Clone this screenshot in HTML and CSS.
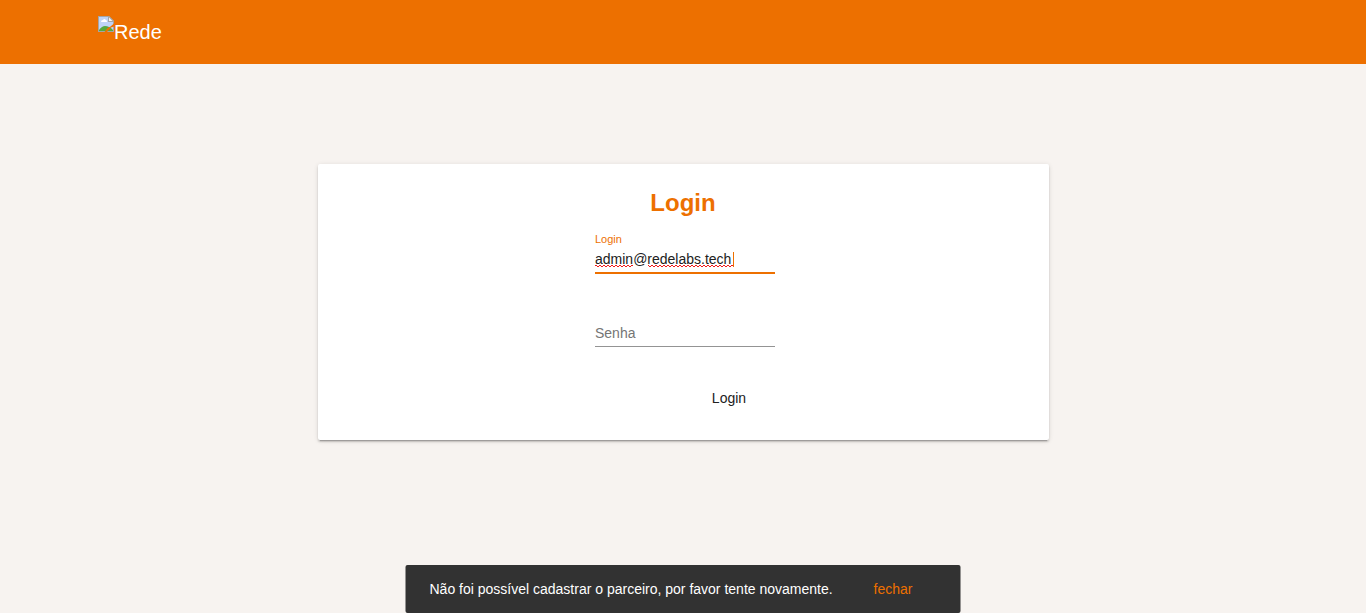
FILE: index.html
```html
<!DOCTYPE html>
<html lang="pt-BR">
<head>
<meta charset="utf-8">
<meta name="viewport" content="width=device-width, initial-scale=1">
<title>Login</title>
<link rel="stylesheet" href="styles.css">
</head>
<body>
<header class="toolbar">
  <a class="brand" href="#">
    <svg class="brand-icon" width="16" height="16" viewBox="0 0 16 16" aria-hidden="true">
      <path fill="#a5a5a5" d="M0 0h11l5 5v11H0z"/>
      <path fill="#c0d3f6" d="M1 1h9.500L15 5.500V15H1z"/>
      <path fill="#fff" d="M3 6q0-2 2-2 1-2 3 0 1 0 1 2z"/>
      <path fill="#57a83c" d="M1 15v-1q3-4 6-4 4 0 8 4v1z"/>
      <path fill="#a5a5a5" d="M10 0h1l5 5v1h-6z"/>
      <path fill="#f4f4f4" d="M11 1.500L14.500 5H11z"/>
      <path fill="#ed7000" d="M16 7.500v3l-3 1-4 4.500H6.500l3-4 3-1.500z"/>
    </svg>
    <span>Rede</span>
  </a>
</header>
<main class="page">
  <form class="card">
    <h1 class="title">Login</h1>
    <div class="field active">
      <label class="label" for="user">Login</label>
      <input class="input" id="user" type="text" value="admin@redelabs.tech" spellcheck="false">
      <svg class="marks" width="180" height="18" aria-hidden="true" shape-rendering="crispEdges">
        <defs>
          <pattern id="wave" width="4" height="2" y="14" patternUnits="userSpaceOnUse">
            <path fill="#f01818" d="M0 0h2v1H0zM2 1h2v1H2z"/>
          </pattern>
        </defs>
        <path fill="url(#wave)" d="M0 14h38v2H0zM53 14h85v2H53z"/>
        <path fill="#ed7000" d="M138 1h1v15h-1z"/>
      </svg>
    </div>
    <div class="field">
      <label class="label hidden" for="pass">Senha</label>
      <input class="input" id="pass" type="password" placeholder="Senha">
    </div>
    <button class="submit" type="submit">Login</button>
  </form>
</main>
<div class="snackbar" role="alert">
  <span>Não foi possível cadastrar o parceiro, por favor tente novamente.</span>
  <button class="dismiss" type="button">fechar</button>
</div>
</body>
</html>
```
FILE: styles.css
```css
* {
  box-sizing: border-box;
}

body {
  margin: 0;
  min-height: 100vh;
  background: #f7f3f0;
  color: #212121;
  font: 14px/20px "Liberation Sans", Arial, sans-serif;
}

.toolbar {
  display: flex;
  align-items: center;
  height: 64px;
  padding: 0 98px;
  background: #ed7000;
}

.brand {
  display: flex;
  align-items: flex-start;
  color: #fff;
  font-size: 20px;
  line-height: 32px;
  text-decoration: none;
}

.page {
  padding: 100px 16px;
}

.card {
  display: flex;
  flex-direction: column;
  align-items: center;
  max-width: 731px;
  margin: 0 auto;
  padding: 24px;
  border-radius: 2px;
  background: #fff;
  box-shadow: 0 3px 1px -2px rgba(0, 0, 0, .2), 0 2px 2px 0 rgba(0, 0, 0, .14), 0 1px 5px 0 rgba(0, 0, 0, .12);
}

.title {
  margin: 0 0 12px;
  color: #ed7000;
  font-size: 24px;
  line-height: 30px;
}

.field {
  position: relative;
  width: 180px;
  height: 74px;
  padding-top: 20px;
  margin-left: 4px;
}

.label {
  position: absolute;
  top: 0;
  left: 0;
  color: #ed7000;
  font-size: 11px;
  line-height: 18px;
}

.hidden {
  clip-path: inset(50%);
}

.input {
  display: block;
  width: 100%;
  height: 23px;
  padding: 0 0 4px;
  border: 0;
  border-bottom: 1px solid #949494;
  border-radius: 0;
  outline: 0;
  background: none;
  color: #212121;
  font: inherit;
}

.active .input {
  height: 24px;
  border-bottom: 2px solid #ed7000;
}

.input::placeholder {
  color: #757575;
  opacity: 1;
}

.marks {
  position: absolute;
  top: 21px;
  left: 0;
  pointer-events: none;
}

.submit {
  height: 36px;
  margin: 2px 0 0 92px;
  padding: 0 16px;
  border: 0;
  background: none;
  color: #212121;
  font: inherit;
}

.snackbar {
  position: fixed;
  bottom: 0;
  left: 50%;
  display: flex;
  align-items: center;
  justify-content: space-between;
  gap: 32px;
  min-width: 555px;
  min-height: 48px;
  padding: 0 48px 0 24px;
  border-radius: 2px;
  background: #323232;
  color: #fff;
  white-space: nowrap;
  transform: translateX(-50%);
}

.dismiss {
  padding: 0;
  border: 0;
  background: none;
  color: #ed7000;
  font: inherit;
}
```
